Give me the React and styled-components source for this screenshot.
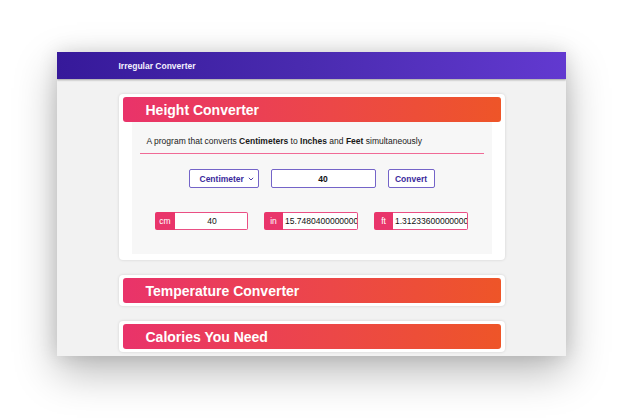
import styled, { createGlobalStyle } from "styled-components";

const GlobalStyle = createGlobalStyle`
  html, body {
    margin: 0;
    padding: 0;
    background: #ffffff;
    font-family: "Liberation Sans", Arial, sans-serif;
  }
`;

const Page = styled.div`
  width: 623px;
  height: 418px;
  display: flex;
  justify-content: center;
  padding-top: 52px;
  box-sizing: border-box;
  overflow: hidden;
`;

const Window = styled.div`
  width: 509px;
  height: 304px;
  background: #f2f2f2;
  overflow: hidden;
  display: flex;
  flex-direction: column;
  box-shadow: 0 16px 40px rgba(0, 0, 0, 0.28), 0 0 18px rgba(0, 0, 0, 0.12);
`;

const TopBar = styled.div`
  height: 27px;
  flex-shrink: 0;
  background: linear-gradient(90deg, #36199a 0%, #4a2bb0 50%, #6239d0 100%);
  box-shadow: 0 1px 2px rgba(0, 0, 0, 0.35);
  display: flex;
  justify-content: center;
  align-items: center;
  position: relative;
  z-index: 1;
`;

const TopTitle = styled.div`
  width: 386px;
  color: #f4f1ff;
  font-size: 8.5px;
  font-weight: bold;
`;

const Main = styled.div`
  width: 386px;
  margin: 0 auto;
  padding-top: 15px;
  display: flex;
  flex-direction: column;
  gap: 15px;
`;

const Card = styled.div`
  background: #ffffff;
  border-radius: 4px;
  padding: 3px 4px;
  box-shadow: 0 0 3px rgba(0, 0, 0, 0.14);
`;

const CardHead = styled.div`
  height: 25px;
  border-radius: 3px;
  background: linear-gradient(90deg, #e9336a 0%, #ec4748 55%, #ee5528 100%);
  color: #ffffff;
  font-size: 14px;
  font-weight: bold;
  display: flex;
  align-items: center;
  padding-left: 23px;
`;

const Panel = styled.div`
  margin: 0 9px 3px;
  background: #f7f7f7;
  padding: 0 8px 24px;
`;

const Desc = styled.div`
  padding: 14px 7px 7px;
  line-height: 10px;
  font-size: 8.5px;
  color: #1a1a1a;
  border-bottom: 1.5px solid #f06a96;

  b {
    font-weight: bold;
  }
`;

const Row = styled.div`
  display: flex;
  justify-content: center;
  gap: ${(p) => p.$gap}px;
  margin-top: ${(p) => p.$top}px;
`;

const SelectBox = styled.div`
  width: 70px;
  height: 19px;
  box-sizing: border-box;
  border: 1px solid #7464c8;
  border-radius: 2px;
  background: #ffffff;
  display: flex;
  align-items: center;
  padding: 0 4px 0 10px;
  color: #3b2a9c;
  font-size: 8.5px;
  font-weight: bold;

  span {
    flex: 1;
  }
`;

const MainInput = styled.input`
  width: 105px;
  height: 19px;
  box-sizing: border-box;
  border: 1px solid #7464c8;
  border-radius: 2px;
  background: #ffffff;
  text-align: center;
  font-family: inherit;
  font-size: 8.5px;
  font-weight: bold;
  color: #111111;
  padding: 0;
  outline: none;
`;

const Button = styled.button`
  width: 47px;
  height: 19px;
  box-sizing: border-box;
  border: 1px solid #7464c8;
  border-radius: 2px;
  background: #ffffff;
  color: #3b2a9c;
  font-family: inherit;
  font-size: 8.5px;
  font-weight: bold;
  padding: 0;
`;

const Group = styled.div`
  display: flex;
  height: 18px;
`;

const Unit = styled.div`
  width: ${(p) => p.$w}px;
  background: #e9356b;
  color: #ffffff;
  font-size: 8.5px;
  display: flex;
  align-items: center;
  justify-content: center;
  border-radius: 2px 0 0 2px;
`;

const ValueInput = styled.input`
  width: ${(p) => p.$w}px;
  height: 18px;
  box-sizing: border-box;
  border: 1px solid #ea4f84;
  border-left: none;
  border-radius: 0 2px 2px 0;
  background: #ffffff;
  font-family: inherit;
  font-size: 8.5px;
  color: #111111;
  padding: 0 0 0 2px;
  text-align: ${(p) => (p.$center ? "center" : "left")};
  outline: none;
`;

function Chevron() {
  return (
    <svg width="6" height="4" viewBox="0 0 6 4">
      <path d="M0.8 0.8 L3 3 L5.2 0.8" fill="none" stroke="#3b2a9c" strokeWidth="0.9" />
    </svg>
  );
}

function SectionCard({ title, children }) {
  return (
    <Card>
      <CardHead>{title}</CardHead>
      {children}
    </Card>
  );
}

export default function App() {
  return (
    <>
      <GlobalStyle />
      <Page>
        <Window>
          <TopBar>
            <TopTitle>Irregular Converter</TopTitle>
          </TopBar>
          <Main>
            <SectionCard title="Height Converter">
              <Panel>
                <Desc>
                  A program that converts <b>Centimeters</b> to <b>Inches</b> and{" "}
                  <b>Feet</b> simultaneously
                </Desc>
                <Row $gap={12} $top={15}>
                  <SelectBox>
                    <span>Centimeter</span>
                    <Chevron />
                  </SelectBox>
                  <MainInput readOnly value="40" />
                  <Button>Convert</Button>
                </Row>
                <Row $gap={16} $top={24}>
                  <Group>
                    <Unit $w={20}>cm</Unit>
                    <ValueInput $w={73} $center readOnly value="40" />
                  </Group>
                  <Group>
                    <Unit $w={19}>in</Unit>
                    <ValueInput $w={75} readOnly value="15.7480400000000" />
                  </Group>
                  <Group>
                    <Unit $w={19}>ft</Unit>
                    <ValueInput $w={75} readOnly value="1.31233600000000" />
                  </Group>
                </Row>
              </Panel>
            </SectionCard>
            <SectionCard title="Temperature Converter" />
            <SectionCard title="Calories You Need" />
          </Main>
        </Window>
      </Page>
    </>
  );
}
